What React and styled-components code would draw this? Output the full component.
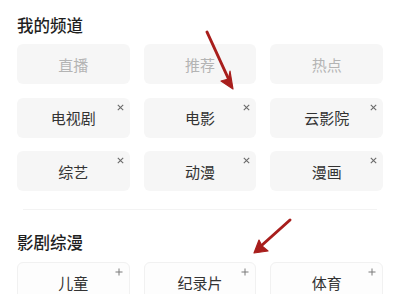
import React from "react";
import styled, { createGlobalStyle } from "styled-components";

const Global = createGlobalStyle`
  html, body { margin: 0; padding: 0; background: #fff; }
  body { font-family: "Noto Sans CJK SC", "Noto Sans", sans-serif; }
`;

const Page = styled.div`
  position: relative;
  width: 400px;
  height: 294px;
  overflow: hidden;
  padding: 14px 17px 0;
  box-sizing: border-box;
  background: #fff;
`;

const Title = styled.div`
  font-size: 16.5px;
  line-height: 22px;
  height: 22px;
  font-weight: 500;
  color: #1f1f1f;
  margin-bottom: ${(p) => p.$gap}px;
`;

const Grid = styled.div`
  display: grid;
  grid-template-columns: repeat(3, 1fr);
  column-gap: 14px;
  row-gap: 13.5px;
`;

const Tile = styled.div`
  position: relative;
  height: 40px;
  border-radius: 6px;
  box-sizing: border-box;
  display: flex;
  align-items: center;
  justify-content: center;
  font-size: 15px;
  color: ${(p) => (p.$disabled ? "#b4b4b4" : "#333")};
  background: ${(p) => (p.$add ? "#fdfdfd" : "#f6f6f6")};
  border: ${(p) => (p.$add ? "1px solid #f1f1f1" : "none")};
`;

const Mark = styled.span`
  position: absolute;
  top: ${(p) => p.$top}px;
  right: 6px;
  width: 7px;
  height: 7px;
  display: flex;
`;

const Divider = styled.div`
  height: 1px;
  background: #f3f3f3;
  margin: 18px 6px 21px;
`;

const Overlay = styled.svg`
  position: absolute;
  left: 0;
  top: 0;
  pointer-events: none;
`;

const Cross = () => (
  <svg width="7" height="7" viewBox="0 0 7 7">
    <path d="M0.8 0.8L6.2 6.2M6.2 0.8L0.8 6.2" stroke="#6a6a6a" strokeWidth="1.1" />
  </svg>
);

const Plus = () => (
  <svg width="8" height="8" viewBox="0 0 8 8">
    <path d="M4 0.5V7.5M0.5 4H7.5" stroke="#7a7a7a" strokeWidth="1" />
  </svg>
);

const fixed = ["直播", "推荐", "热点"];
const mine = ["电视剧", "电影", "云影院", "综艺", "动漫", "漫画"];
const more = ["儿童", "纪录片", "体育"];

export default function App() {
  return (
    <>
      <Global />
      <Page>
        <Title $gap={8}>我的频道</Title>
        <Grid>
          {fixed.map((t) => (
            <Tile key={t} $disabled>
              {t}
            </Tile>
          ))}
          {mine.map((t) => (
            <Tile key={t}>
              {t}
              <Mark $top={6}>
                <Cross />
              </Mark>
            </Tile>
          ))}
        </Grid>
        <Divider />
        <Title $gap={9}>影剧综漫</Title>
        <Grid>
          {more.map((t) => (
            <Tile key={t} $add>
              {t}
              <Mark $top={5} style={{ width: 8, height: 8 }}>
                <Plus />
              </Mark>
            </Tile>
          ))}
        </Grid>
        <Overlay width="400" height="294" viewBox="0 0 400 294">
          <g stroke="#a81e1c" strokeWidth="3" strokeLinecap="round" fill="#a81e1c">
            <line x1="207" y1="32" x2="229" y2="80" />
            <path d="M233 89 L221 81 L228.5 79 L230 71 Z" strokeWidth="1.2" strokeLinejoin="round" />
            <line x1="290" y1="220" x2="261" y2="246" />
            <path d="M254 253 L259 240 L262 246 L268 251 Z" strokeWidth="1.2" strokeLinejoin="round" />
          </g>
        </Overlay>
      </Page>
    </>
  );
}
